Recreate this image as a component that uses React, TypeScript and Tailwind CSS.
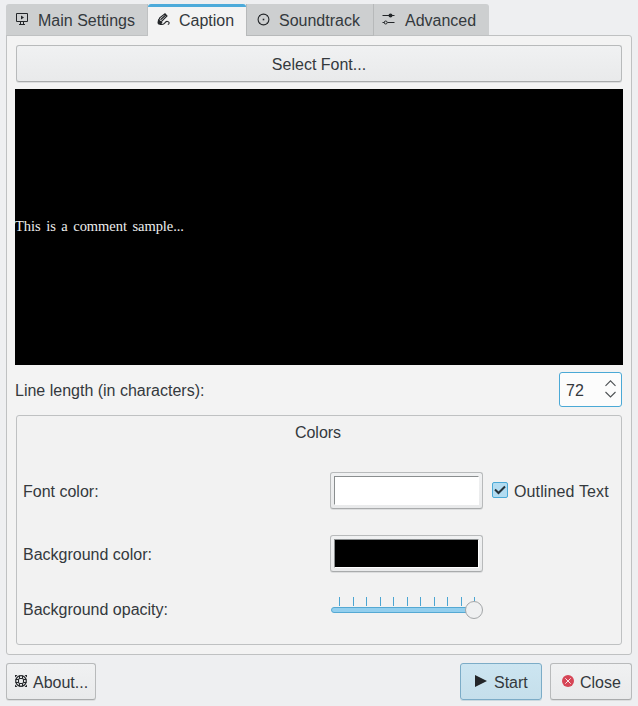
import type { ReactNode } from 'react';

const raised =
  'flex items-center rounded-[3px] border border-[#b8babb] border-b-[#a9abac] bg-linear-to-b from-[#f0f1f2] to-[#e9eaeb] shadow-[0_1px_0_#dcddde]';

function Label({ children, className = '' }: { children: ReactNode; className?: string }) {
  return <span className={`whitespace-pre leading-[18px] ${className}`}>{children}</span>;
}

function ScreenIcon() {
  return (
    <svg width="12" height="13" viewBox="0 0 12 13" className="shrink-0" fill="none" stroke="#232629">
      <path d="M.5.5h11v8H.5zM4.5 9v2.5M7.5 9v2.5M3 11.500h6" />
      <path d="M5 2.5v4l3-2z" fill="#232629" stroke="none" />
    </svg>
  );
}

function PenIcon() {
  return (
    <svg width="13" height="13" viewBox="0 0 13 13" className="mb-px shrink-0" fill="none" stroke="#232629">
      <path d="M1.700 7.500 2.700 4.800 8 .8l2 2.200-5 5-2.500.8Z" strokeWidth="1.100" />
      <path d="M3.500 6.800 8.800 2" strokeWidth="1.300" />
      <path d="M1.200 6 .5 9.500c0 1.800 1.500 2.500 3.500 2.500L5.500 9 3.600 8Z" fill="#232629" stroke="none" />
      <path d="M3 11.500h2c2 0 2.700-1.300 3.500-2.300C9.400 8 11.700 8.200 12.100 9.600c.200 1-.500 1.700-1.300 2" strokeWidth="1.100" />
    </svg>
  );
}

function DiscIcon() {
  return (
    <svg width="13" height="13" viewBox="0 0 13 13" className="shrink-0" fill="none" stroke="#232629">
      <circle cx="6.500" cy="6.500" r="5.400" strokeWidth="1.100" />
      <path d="M5.700 5.700h1.600v1.600H5.700z" fill="#232629" stroke="none" />
      <path d="M2.200 2.200l1 1M10.800 2.200l-1 1M2.200 10.800l1-1M10.800 10.800l-1-1" strokeWidth=".8" />
    </svg>
  );
}

function SlidersIcon() {
  return (
    <svg width="13" height="12" viewBox="0 0 13 12" className="mb-0.5 shrink-0" fill="none" stroke="#232629">
      <path d="M.5 2.500h12M.5 9.500h2M5.500 9.500h7" />
      <circle cx="8.500" cy="2.500" r="2" fill="#232629" stroke="none" />
      <circle cx="3.700" cy="9.500" r="1.500" />
    </svg>
  );
}

function LifebuoyIcon() {
  return (
    <svg width="12" height="12" viewBox="0 0 12 12" className="mb-0.5 shrink-0" fill="none" stroke="#232629">
      <circle cx="6" cy="6" r="5.300" strokeWidth="1.200" />
      <rect x="3.500" y="3.500" width="5" height="5" rx="1.500" strokeWidth="1.100" />
      <path d="M4.500.5v3M7.500.5v3M4.500 8.500v3M7.500 8.500v3M.5 4.500h3M.5 7.500h3M8.500 4.500h3M8.500 7.500h3" />
      <path d="M0 0h2.500L0 2.500zM12 0H9.500L12 2.500zM0 12h2.500L0 9.500zM12 12H9.500L12 9.500z" fill="#232629" stroke="none" />
    </svg>
  );
}

function ColorButton({ swatch }: { swatch: string }) {
  return (
    <div className={`${raised} h-[37px] w-[153px] p-[3px]`}>
      <div className={`h-[29px] w-full border border-t-[#8a8e8f] border-l-[#8a8e8f] border-r-white border-b-white ${swatch}`} />
    </div>
  );
}

function OpacitySlider() {
  const ticks = [8, 22, 35, 49, 62, 76, 89, 103, 116, 130, 143];
  return (
    <svg width="154" height="24" viewBox="0 0 154 24" className="shrink-0">
      {ticks.map((x) => (
        <rect key={x} x={x} y="1" width="1" height="9" fill="#4ba5d2" />
      ))}
      <rect x=".5" y="11.500" width="143" height="5" rx="2.500" fill="#93cfee" stroke="#55a9d3" />
      <circle cx="143" cy="14" r="8.500" fill="#eff0f1" stroke="#a3a6a8" />
    </svg>
  );
}

export default function App() {
  return (
    <div className="flex h-[706px] w-[638px] flex-col overflow-hidden bg-[#eeeff1] px-1.5 pt-1 font-['Liberation_Sans',sans-serif] text-base text-[#34393d]">
      <div className="relative z-10 flex h-8 items-start">
        <div className="flex h-8 w-[142px] items-center rounded-tl-[3px] border-r border-b border-[#bfc1c2] bg-[#cdcfd0] pl-2.5">
          <ScreenIcon />
          <Label className="ml-2.5 pt-0.5">Main Settings</Label>
        </div>
        <div className="flex h-8 w-[98px] items-center rounded-t-[3px] border-t-[3px] border-[#4caada] bg-[#f3f3f3] pb-[3px] pl-[9px]">
          <PenIcon />
          <Label className="ml-[9px] pt-px">Caption</Label>
        </div>
        <div className="flex h-8 w-[128px] items-center border-x border-b border-[#b7b9ba] bg-[#cdcfd0] pl-[9.500px]">
          <DiscIcon />
          <Label className="ml-[9.500px] pt-0.5">Soundtrack</Label>
        </div>
        <div className="flex h-8 w-[115px] items-center rounded-tr-[3px] border-b border-[#bfc1c2] bg-[#cdcfd0] pl-2">
          <SlidersIcon />
          <Label className="ml-2.5 pt-0.5">Advanced</Label>
        </div>
      </div>

      <div className="-mt-px flex h-[620px] w-[626px] flex-col rounded-[3px] rounded-tl-none border border-[#bfc1c2] bg-[#f3f3f3] px-2 pt-[9px]">
        <div className={`${raised} ml-px h-[37px] w-[606px] justify-center`}>
          <Label className="pt-0.5">Select Font...</Label>
        </div>
        <div className="mt-[7px] flex h-[276px] w-[608px] items-center bg-black font-['Liberation_Serif',serif] text-[14.5px] text-[#eeeeee]">
          <Label className="pb-0.5 tracking-[-0.050px] [word-spacing:2px]">This is a comment sample...</Label>
        </div>
        <div className="mt-[7px] flex h-[35px] w-[607px] items-center justify-between">
          <Label className="pt-0.5">Line length (in characters):</Label>
          <div className="flex h-[35px] w-[63px] items-center justify-between rounded-[3px] border border-[#4ba9d6] bg-[#fcfcfc] pr-[5px] pl-1.5">
            <Label className="pt-0.5">72</Label>
            <svg width="11" height="18" viewBox="0 0 11 18" className="mb-0.5" fill="none" stroke="#4d5154" strokeWidth="1.100">
              <path d="m.5 5.800 5-5 5 5M.5 12l5 5 5-5" />
            </svg>
          </div>
        </div>

        <div className="mt-2 ml-px h-[230px] w-[606px] rounded-[3px] border border-[#bfc1c2] bg-[#f2f2f2] pt-2 pl-1.5">
          <div className="flex justify-center pr-2">
            <Label>Colors</Label>
          </div>
          <div className="mt-[30px] flex h-[37px] items-center">
            <Label className="w-[307px] pt-0.5">Font color:</Label>
            <ColorButton swatch="bg-white" />
            <div className="mb-0.5 ml-[9px] flex size-4 items-center justify-center rounded-[2px] border border-[#4ba9d6] bg-[#b3dcf1]">
              <svg width="12" height="10" viewBox="0 0 12 10" fill="none" stroke="#27323a" strokeWidth="2">
                <path d="m1 4.500 3.500 3.500 6.500-6.500" />
              </svg>
            </div>
            <Label className="ml-1.5 pt-0.5 tracking-[0.130px]">Outlined Text</Label>
          </div>
          <div className="mt-[26px] flex h-[37px] items-center">
            <Label className="w-[307px] pt-0.5">Background color:</Label>
            <ColorButton swatch="bg-black" />
          </div>
          <div className="mt-6 flex h-6 items-start">
            <Label className="mt-[5px] w-[308px]">Background opacity:</Label>
            <OpacitySlider />
          </div>
        </div>
      </div>

      <div className="mt-2 flex h-[37px] w-[626px]">
        <div className={`${raised} w-[90px] pl-2`}>
          <LifebuoyIcon />
          <Label className="ml-1.5 pt-0.5">About...</Label>
        </div>
        <div className="ml-auto flex w-[82px] items-center rounded-[3px] border border-[#7cacc7] bg-linear-to-b from-[#cce5f1] to-[#c5dfeb] pl-3.5 shadow-[0_1px_0_#cbd8df]">
          <svg width="12" height="12" viewBox="0 0 12 12" className="mb-0.5">
            <path d="m0 0 12 6-12 6z" fill="#232629" />
          </svg>
          <Label className="ml-[7px] pt-0.5">Start</Label>
        </div>
        <div className={`${raised} ml-2 w-[82px] pl-[11px]`}>
          <svg width="12" height="12" viewBox="0 0 12 12" className="mb-0.5">
            <circle cx="6" cy="6" r="6" fill="#d64556" />
            <path d="m3.300 3.300 5.400 5.400m0-5.400-5.400 5.400" stroke="#f8e8ea" />
          </svg>
          <Label className="ml-1.5 pt-0.5">Close</Label>
        </div>
      </div>
    </div>
  );
}
